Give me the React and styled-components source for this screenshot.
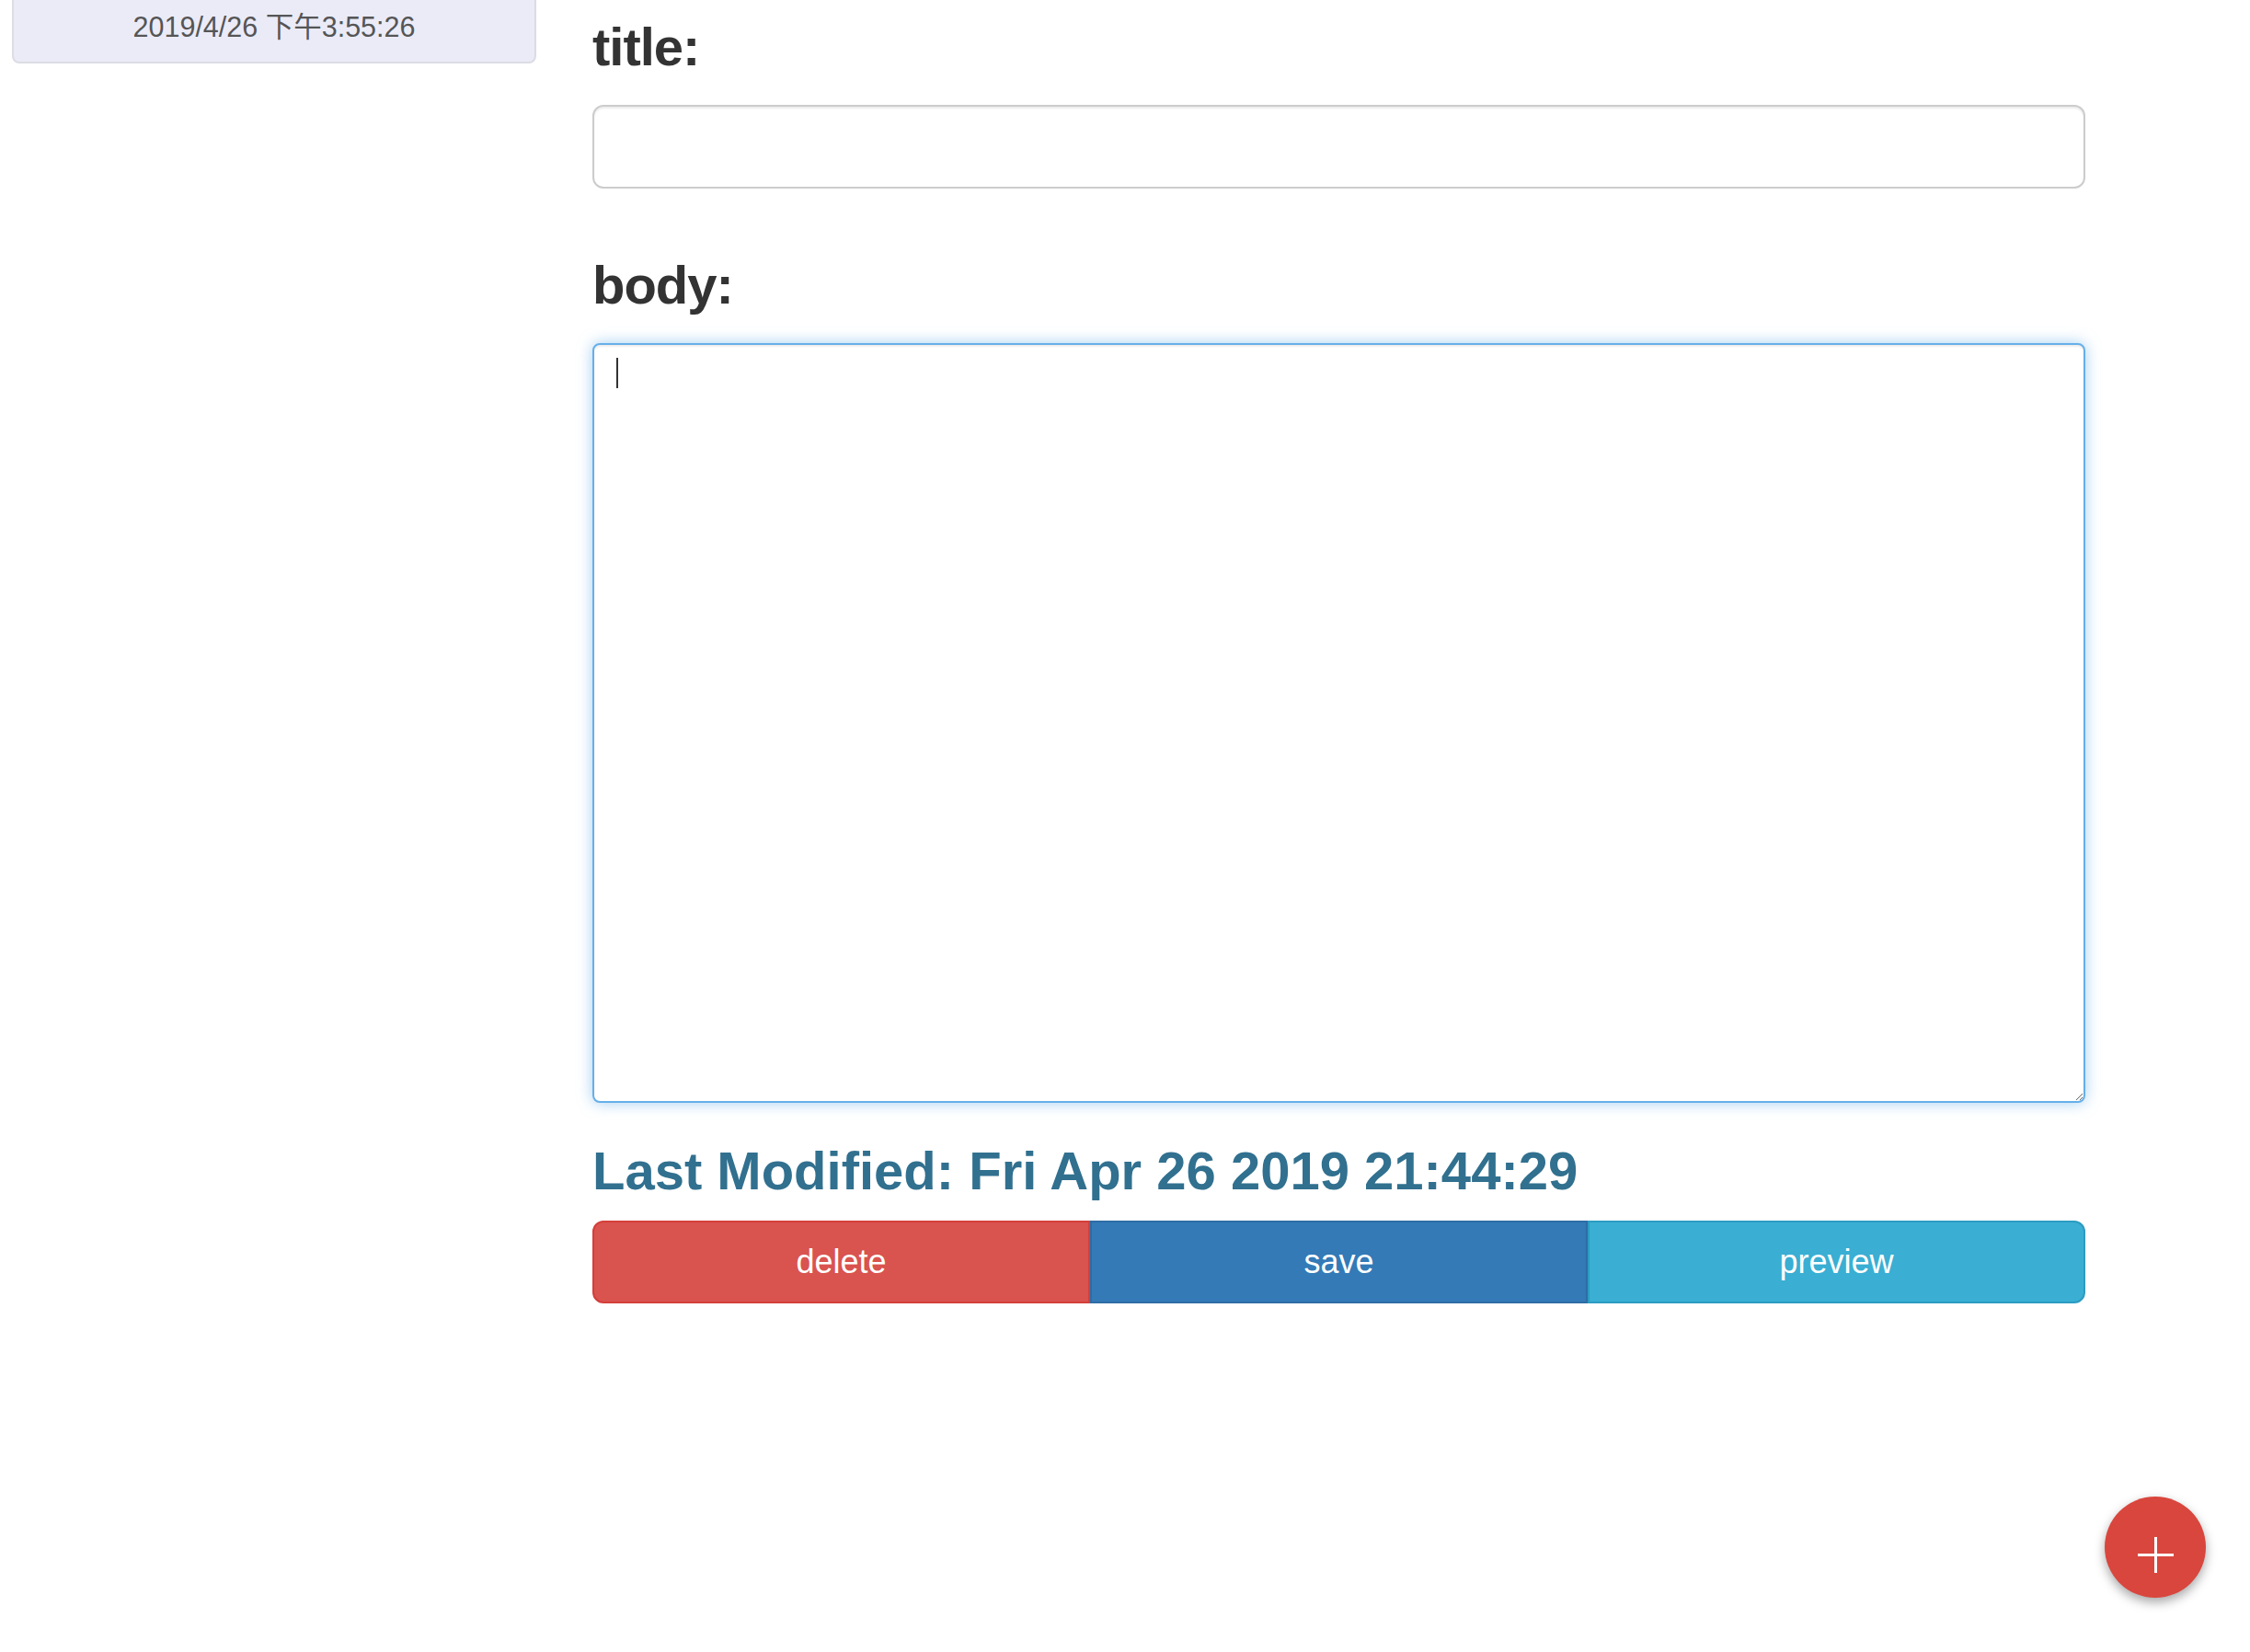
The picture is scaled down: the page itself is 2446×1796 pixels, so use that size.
import React from 'react';
import styled, { createGlobalStyle } from 'styled-components';

const GlobalStyle = createGlobalStyle`
  html, body {
    margin: 0;
    padding: 0;
    background: #fff;
  }
  body {
    font-family: 'Liberation Sans', 'Noto Sans CJK SC', sans-serif;
    color: #333;
  }
  * {
    box-sizing: border-box;
  }
`;

function App() {
  return (
    <>
      <GlobalStyle />
      <Page>
        <Sidebar>
          <NoteItem>2019/4/26 下午3:55:26</NoteItem>
        </Sidebar>

        <Editor>
          <Field>
            <Label>title:</Label>
            <TitleInput type='text' defaultValue='' />
          </Field>

          <Field>
            <Label>body:</Label>
            <BodyWrap>
              <BodyArea defaultValue='' />
              <Caret />
            </BodyWrap>
          </Field>

          <Modified>Last Modified: Fri Apr 26 2019 21:44:29</Modified>

          <ButtonGroup>
            <ActionBtn $variant='danger'>delete</ActionBtn>
            <ActionBtn $variant='primary'>save</ActionBtn>
            <ActionBtn $variant='info'>preview</ActionBtn>
          </ButtonGroup>
        </Editor>

        <Fab aria-label='new note'>
          <svg width='39' height='39' viewBox='0 0 39 39'>
            <line x1='0' y1='19.5' x2='39' y2='19.5' stroke='#fff' strokeWidth='3' />
            <line x1='19.5' y1='0' x2='19.5' y2='39' stroke='#fff' strokeWidth='3' />
          </svg>
        </Fab>
      </Page>
    </>
  );
}

export default App;

const variants = {
  danger: { bg: '#d9534f', border: '#d43f3a' },
  primary: { bg: '#337ab7', border: '#2e6da4' },
  info: { bg: '#3aaed3', border: '#2b9cc2' },
};

const Page = styled.div`
  display: flex;
  align-items: flex-start;
  padding-left: 13px;
  min-height: 1796px;
`;

const Sidebar = styled.aside`
  width: 570px;
  flex-shrink: 0;
`;

const NoteItem = styled.div`
  background-color: #ebebf8;
  border: 2px solid #dcdce4;
  border-top: none;
  border-radius: 0 0 8px 8px;
  height: 69px;
  padding-top: 8px;
  font-size: 30.5px;
  line-height: 43px;
  color: #555;
  text-align: center;
`;

const Editor = styled.main`
  width: 1623px;
  margin-left: 61px;
  padding-top: 19px;
  display: flex;
  flex-direction: column;
`;

const Field = styled.div`
  display: flex;
  flex-direction: column;

  & + & {
    margin-top: 73px;
  }
`;

const Label = styled.label`
  margin: 0 0 31px;
  font-size: 58px;
  line-height: 64px;
  font-weight: 700;
  letter-spacing: -1px;
  color: #333;
`;

const TitleInput = styled.input`
  width: 100%;
  height: 91px;
  border: 2px solid #ccc;
  border-radius: 12px;
  padding: 20px 32px;
  font-size: 36px;
  font-family: inherit;
  box-shadow: inset 0 2px 2px rgba(0, 0, 0, 0.075);
  outline: none;
`;

const BodyWrap = styled.div`
  position: relative;
  display: flex;
`;

const BodyArea = styled.textarea`
  width: 100%;
  height: 826px;
  border: 2px solid #66afe9;
  border-radius: 8px;
  padding: 12px 24px;
  font-size: 28px;
  font-family: inherit;
  resize: vertical;
  outline: none;
  box-shadow: inset 0 2px 2px rgba(0, 0, 0, 0.075), 0 0 16px rgba(102, 175, 233, 0.6);
`;

const Caret = styled.span`
  position: absolute;
  left: 26px;
  top: 16px;
  width: 2px;
  height: 33px;
  background: #333;
`;

const Modified = styled.h2`
  margin: 42px 0 0;
  font-size: 58px;
  line-height: 64px;
  font-weight: 700;
  color: #31708f;
  white-space: nowrap;
`;

const ButtonGroup = styled.div`
  display: flex;
  margin-top: 22px;
  height: 90px;
`;

const ActionBtn = styled.button`
  flex: 1;
  height: 100%;
  border: 2px solid ${(p) => variants[p.$variant].border};
  background-color: ${(p) => variants[p.$variant].bg};
  color: #fff;
  font-family: inherit;
  font-size: 36px;
  line-height: 1;
  padding: 0;
  border-radius: 0;
  cursor: pointer;

  &:first-child {
    border-radius: 12px 0 0 12px;
  }

  &:last-child {
    border-radius: 0 12px 12px 0;
  }
`;

const Fab = styled.button`
  position: fixed;
  right: 48px;
  bottom: 59px;
  width: 110px;
  height: 110px;
  border-radius: 50%;
  border: none;
  background-color: #d9463d;
  box-shadow: 0 5px 12px rgba(0, 0, 0, 0.35);
  display: flex;
  align-items: center;
  justify-content: center;
  padding: 16px 0 0;
  cursor: pointer;
`;
